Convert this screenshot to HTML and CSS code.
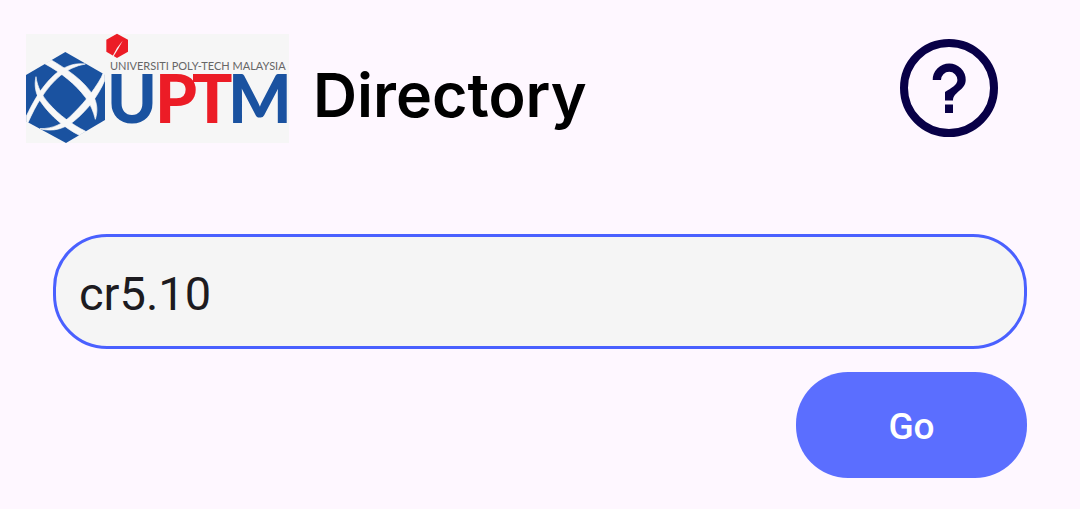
FILE: index.html
```html
<!DOCTYPE html>
<html lang="en">
<head>
<meta charset="utf-8">
<meta name="viewport" content="width=device-width, initial-scale=1">
<title>UPTM Directory</title>
<link rel="stylesheet" href="styles.css">
</head>
<body>
<header class="header">
  <svg class="logo" viewBox="0 0 263 109" role="img" aria-label="UPTM logo">
    <rect width="263" height="109" fill="#f6f6f6"/>
    <g transform="translate(-10 -10) scale(.33333)">
      <path fill="#1a52a0" d="M148 84 267 152V288L150 357 30 292V153Z"/>
      <g fill="#f8f8f8" stroke="#f8f8f8" stroke-width="2">
        <path d="M86 119 106 108C150 134 206 170 232 216C244 238 246 262 238 286C232 262 224 242 208 220C180 182 136 146 86 119Z"/>
        <path d="M208 120C150 130 110 170 78 218C60 244 48 270 36 296L31 292V276C48 242 66 206 96 172C126 138 162 114 208 120Z"/>
        <path d="M60 158C64 190 78 214 98 238C130 274 166 300 209 322L190 334C146 312 104 276 76 236C58 210 54 184 60 158Z"/>
        <path d="M266 150V170C246 216 216 256 178 288C150 312 112 326 72 314C112 314 138 300 162 278C198 244 230 206 256 160L261 148Z"/>
      </g>
      <path fill="#ec1c26" d="M303 29 336 47V83L303 102 271 83V47Z"/>
      <path fill="#f8f8f8" d="M320 50 303 72 288 100 292 98 308 72Z"/>
    </g>
    <text class="logo-caption" x="84" y="36">UNIVERSITI POLY-TECH MALAYSIA</text>
    <text class="logo-name" y="89"><tspan class="logo-blue" x="81">U</tspan><tspan class="logo-red" x="129">P</tspan><tspan class="logo-red" x="166">T</tspan><tspan class="logo-blue" x="202">M</tspan></text>
  </svg>
  <h1 class="title">Directory</h1>
  <button class="help" type="button" aria-label="Help">
    <svg class="help-icon" viewBox="0 0 98 98" aria-hidden="true">
      <circle cx="49" cy="49" r="45" fill="none" stroke="#080047" stroke-width="8"/>
      <path fill="#080047" d="M32.7 41A16.5 16.5 0 0 1 65.7 41C65.7 51 53 53 53 61.5H45V53C51 49 57.4 46 57.4 41A8.2 8.2 0 0 0 41 41ZM45 65.5H53V74H45Z"/>
    </svg>
  </button>
</header>
<main>
  <form class="search">
    <input class="search-input" type="text" name="room" value="cr5.10" aria-label="Search the directory">
    <button class="go" type="submit">Go</button>
  </form>
</main>
</body>
</html>
```
FILE: styles.css
```css
* {
  box-sizing: border-box;
}

body {
  margin: 0;
  background: #fef7ff;
  font-family: Roboto, "Liberation Sans", sans-serif;
}

.header {
  display: flex;
  align-items: flex-start;
  padding: 34px 82px 0 26px;
}

.logo {
  flex: none;
  width: 263px;
  overflow: visible;
}

.logo-caption {
  font: 11px Lato, sans-serif;
  fill: #666;
}

.logo-name {
  font: 900 67px Lato, sans-serif;
}

.logo-blue {
  fill: #1a52a0;
}

.logo-red {
  fill: #ec1c26;
}

.title {
  margin: 25px 0 0 24px;
  font: 600 61px/72px Inter, sans-serif;
  color: #000;
}

.help {
  margin: 5px 0 0 auto;
  padding: 0;
  border: 0;
  background: none;
  cursor: pointer;
}

.help-icon {
  display: block;
  width: 98px;
}

.search {
  display: flex;
  flex-direction: column;
  align-items: flex-end;
  gap: 23px;
  padding: 91px 53px 32px;
}

.search-input {
  width: 100%;
  padding: 28px 23px 24px;
  border: 3px solid #4a60ff;
  border-radius: 54px;
  outline: 0;
  background: #f5f5f5;
  color: #1d1b20;
  font: 47px/57px Roboto, sans-serif;
}

.go {
  min-width: 231px;
  padding: 33px 24px 29px;
  border: 0;
  border-radius: 52px;
  background: #5b6eff;
  color: #fff;
  font: 500 37px/44px Roboto, sans-serif;
  cursor: pointer;
}
```
